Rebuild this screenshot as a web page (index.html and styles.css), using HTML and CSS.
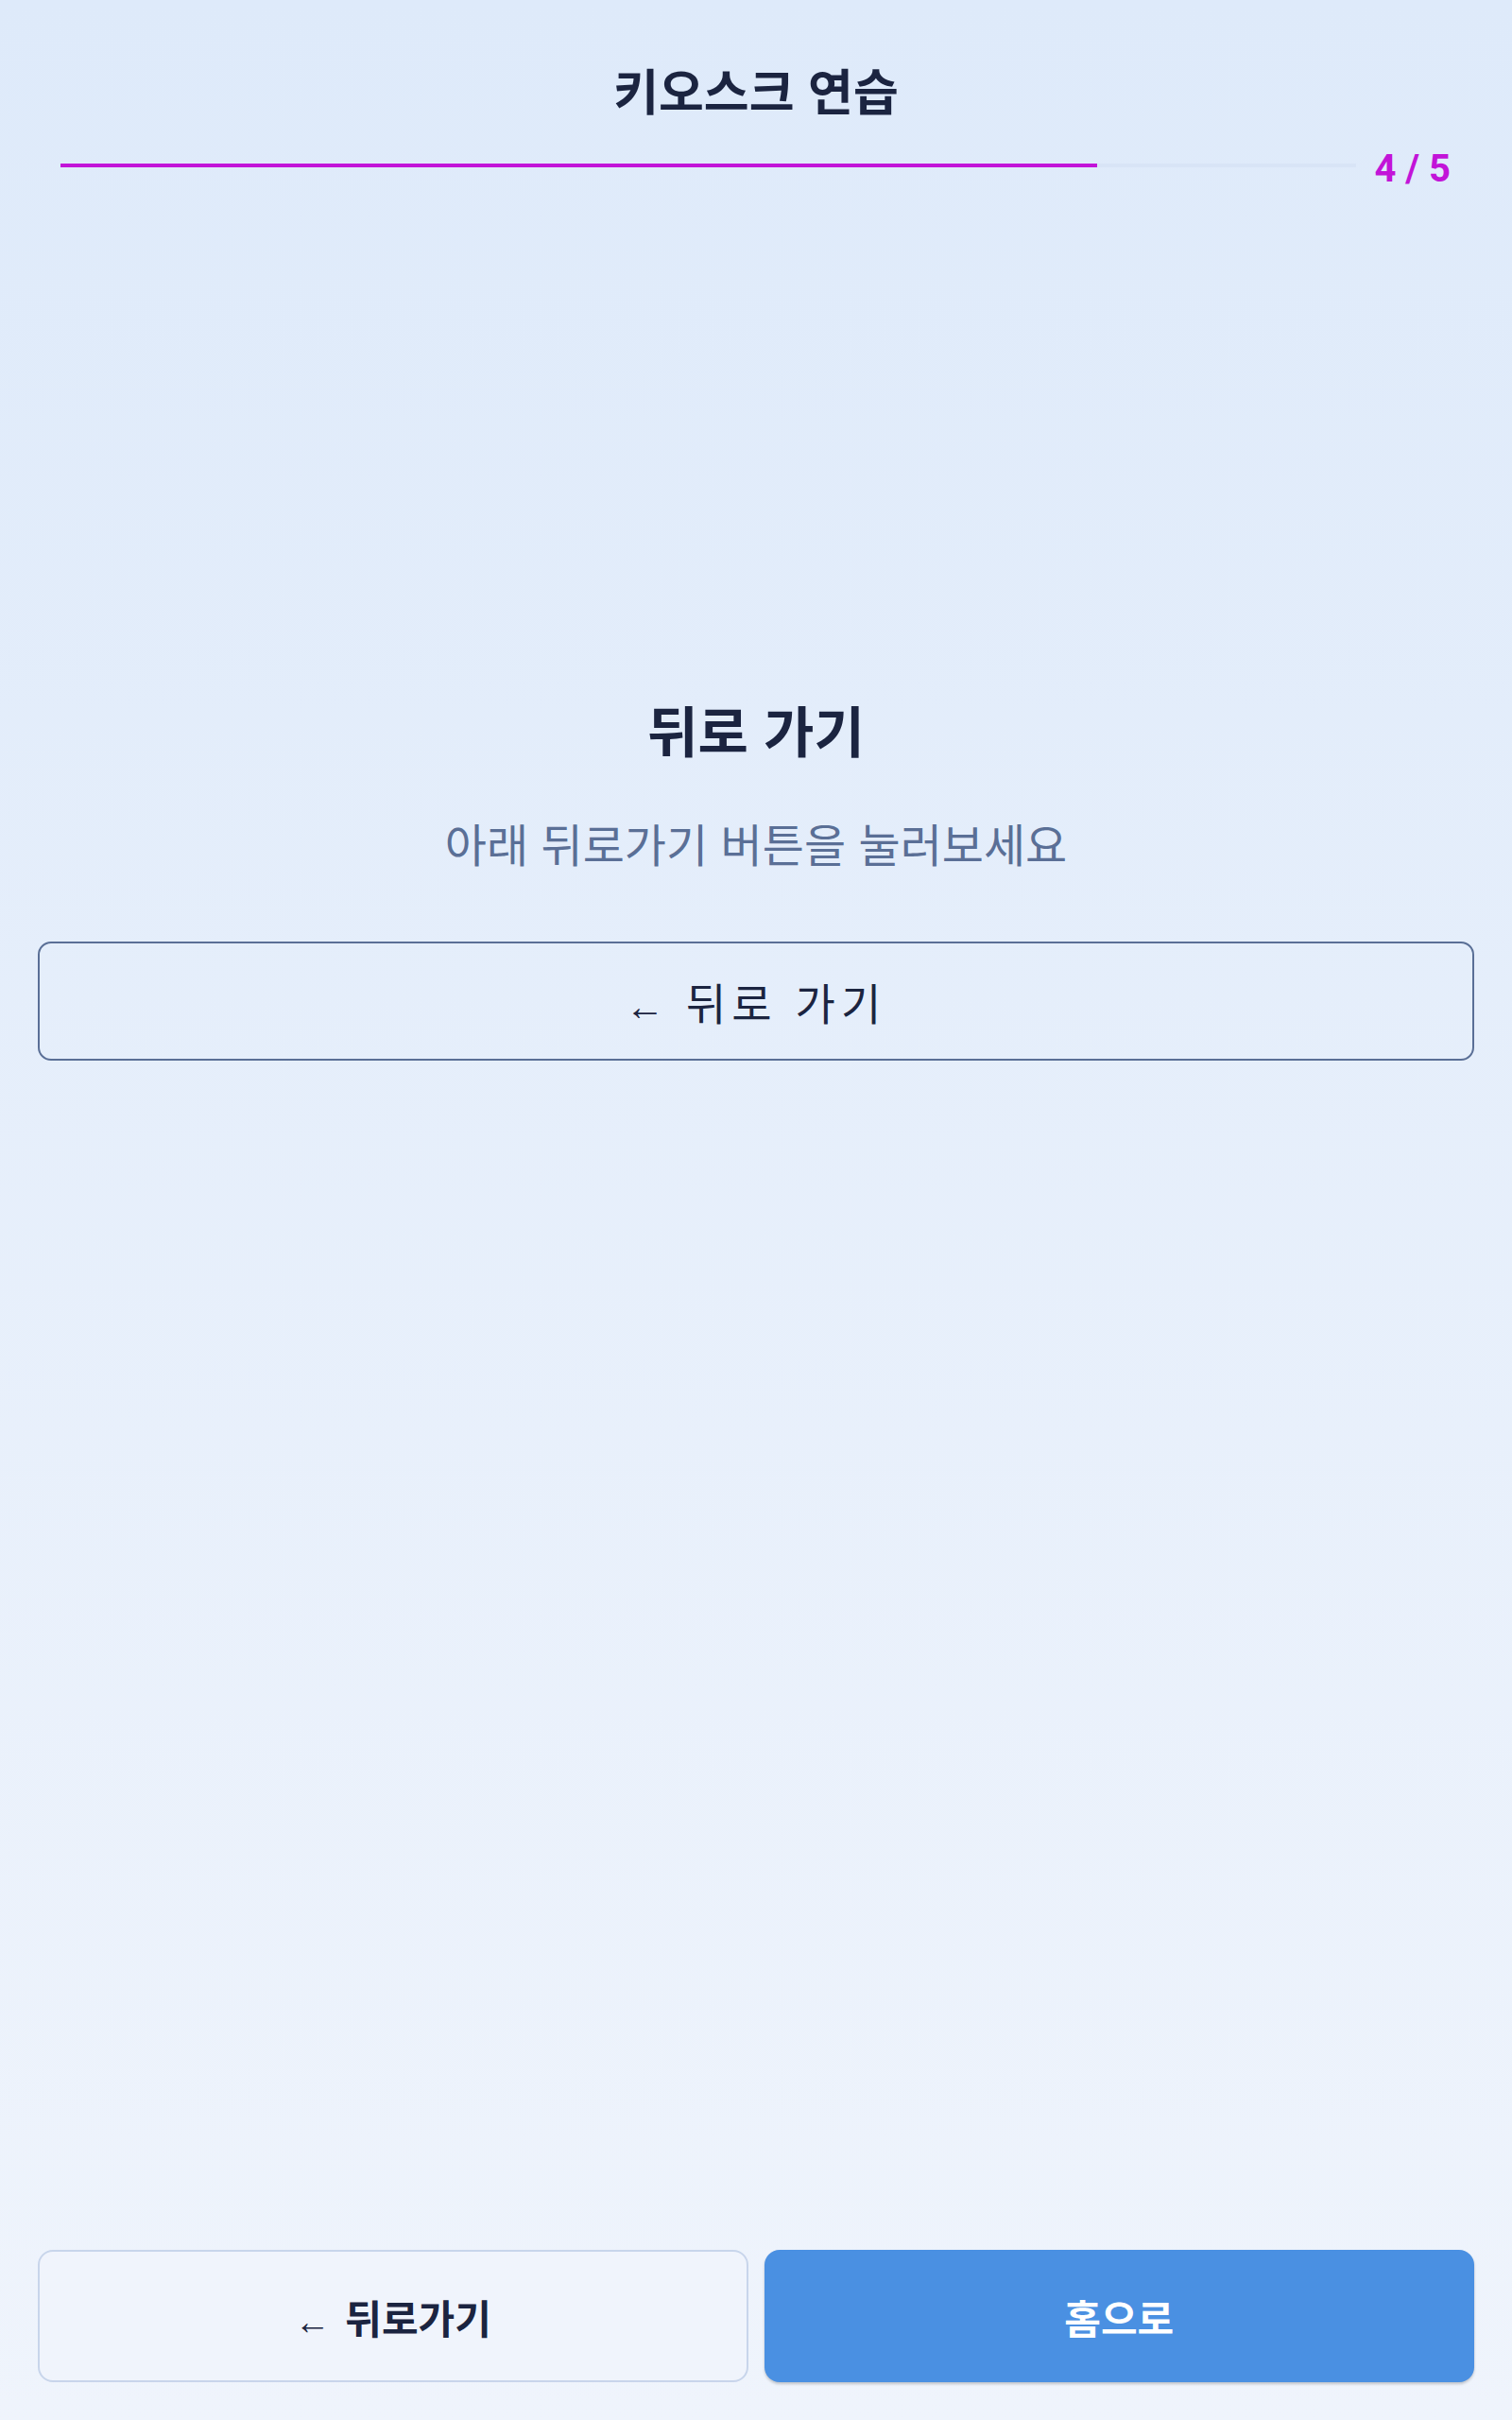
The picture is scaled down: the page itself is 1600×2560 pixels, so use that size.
FILE: index.html
```html
<!DOCTYPE html>
<html lang="ko">
<head>
    <meta charset="UTF-8">
    <meta name="viewport" content="width=device-width, initial-scale=1.0">
    <title>키오스크 연습</title>
    <link rel="stylesheet" href="styles.css">
</head>
<body>
    <div class="page">
        <header class="header">
            <h1 class="title">키오스크 연습</h1>
            <div class="progress">
                <div class="progress-track">
                    <div class="progress-fill" style="width: 80%"></div>
                </div>
                <span class="progress-label">4 / 5</span>
            </div>
        </header>

        <main class="lesson">
            <h2 class="lesson-title">뒤로 가기</h2>
            <p class="lesson-desc">아래 뒤로가기 버튼을 눌러보세요</p>
            <button class="practice-btn" type="button"><span class="arrow">←</span> 뒤로 가기</button>
        </main>

        <nav class="bottom-nav">
            <button class="nav-btn nav-back" type="button"><span class="arrow">←</span> 뒤로가기</button>
            <button class="nav-btn nav-home" type="button">홈으로</button>
        </nav>
    </div>
</body>
</html>
```

FILE: styles.css
```css
body {
    margin: 0;
    font-family: "Noto Sans CJK KR", "Noto Sans", sans-serif;
    background: linear-gradient(180deg, #deeafa 0%, #eff4fc 100%);
    color: #1b2440;
}

.page {
    display: flex;
    flex-direction: column;
    min-height: 2560px;
    box-sizing: border-box;
    padding: 0 40px 40px;
}

/* Header */
.header {
    padding-top: 60px;
    text-align: center;
}

.title {
    margin: 0;
    font-size: 52px;
    font-weight: 700;
    line-height: 70px;
}

.progress {
    display: flex;
    align-items: center;
    gap: 19px;
    margin: 21px 25px 0 24px;
}

.progress-track {
    flex: 1;
    height: 4px;
    background-color: #d8e4f6;
}

.progress-fill {
    height: 100%;
    background-color: #c214d8;
}

.progress-label {
    position: relative;
    top: 4px;
    font-family: Roboto, "Liberation Sans", sans-serif;
    font-size: 40px;
    font-weight: 700;
    color: #c214d8;
}

/* Lesson */
.lesson {
    padding-top: 533px;
    text-align: center;
}

.lesson-title {
    margin: 0;
    font-size: 58px;
    font-weight: 700;
    line-height: 80px;
}

.lesson-desc {
    margin: 48px 0 0;
    font-size: 48px;
    line-height: 64px;
    color: #5a6f96;
}

.practice-btn {
    display: block;
    width: 100%;
    height: 126px;
    margin-top: 73px;
    font-family: inherit;
    font-size: 46px;
    letter-spacing: 6px;
    color: #1b2440;
    background: transparent;
    border: 2px solid #5a6f96;
    border-radius: 14px;
}

.arrow {
    font-family: "Liberation Sans", sans-serif;
    font-size: 0.9em;
    letter-spacing: 0;
    margin-right: 4px;
}

/* Bottom navigation */
.bottom-nav {
    display: grid;
    grid-template-columns: 1fr 1fr;
    gap: 17px;
    margin-top: auto;
}

.nav-btn {
    height: 140px;
    font-family: inherit;
    font-size: 42px;
    font-weight: 700;
    border-radius: 16px;
}

.nav-back {
    color: #1b2440;
    background-color: #f0f4fc;
    border: 2px solid #c8d5eb;
}

.nav-home {
    color: #ffffff;
    background-color: #4a90e2;
    border: none;
    box-shadow: 0 2px 3px rgba(0, 0, 0, 0.2);
}
```
